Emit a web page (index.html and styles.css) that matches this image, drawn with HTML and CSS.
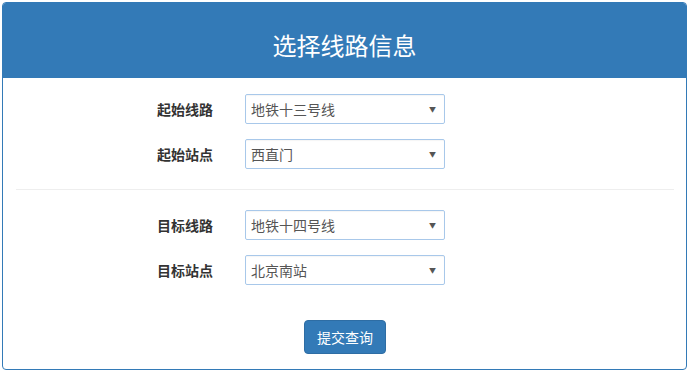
FILE: index.html
```html
<!DOCTYPE html>
<html lang="zh-CN">
<head>
<meta charset="utf-8">
<title>选择线路信息</title>
<link rel="stylesheet" href="styles.css">
</head>
<body>
<div class="panel">
  <div class="panel-heading"><h3 class="panel-title">选择线路信息</h3></div>
  <div class="panel-body">
    <div class="group">
      <div class="row">
        <label class="label">起始线路</label>
        <div class="select"><span>地铁十三号线</span><span class="caret">▼</span></div>
      </div>
      <div class="row">
        <label class="label">起始站点</label>
        <div class="select"><span>西直门</span><span class="caret">▼</span></div>
      </div>
    </div>
    <hr class="divider">
    <div class="group">
      <div class="row">
        <label class="label">目标线路</label>
        <div class="select"><span>地铁十四号线</span><span class="caret">▼</span></div>
      </div>
      <div class="row">
        <label class="label">目标站点</label>
        <div class="select"><span>北京南站</span><span class="caret">▼</span></div>
      </div>
    </div>
    <div class="actions"><button class="btn">提交查询</button></div>
  </div>
</div>
</body>
</html>
```
FILE: styles.css
```css
* { box-sizing: border-box; }
html, body { margin: 0; padding: 0; background: #fff; }
body {
  font-family: "Noto Sans CJK SC", "Noto Sans", sans-serif;
  color: #333;
  padding: 2px 3px 0 2px;
}
.panel {
  border: 1px solid #337ab7;
  border-radius: 4px;
  height: 368px;
  background: #fff;
  overflow: hidden;
}
.panel-heading {
  background: #337ab7;
  height: 75px;
  display: flex;
  align-items: center;
  justify-content: center;
  padding-top: 7px;
}
.panel-title {
  margin: 0;
  color: #fff;
  font-size: 24px;
  font-weight: 400;
  letter-spacing: 0;
}
.panel-body {
  padding: 16px 12px 0 11px;
}
.group {
  display: flex;
  flex-direction: column;
  gap: 15px;
}
.row {
  display: flex;
  align-items: center;
  padding-left: 142px;
}
.label {
  width: 57px;
  text-align: right;
  font-size: 14px;
  font-weight: 700;
  color: #333;
  margin-right: 32px;
}
.select {
  width: 200px;
  height: 30px;
  border: 1px solid #a8c8ea;
  border-radius: 2px;
  box-shadow: inset 0 1px 1px rgba(0,0,0,0.04);
  display: flex;
  align-items: center;
  justify-content: space-between;
  padding: 0 8px 0 5px;
  font-size: 14px;
  color: #555;
}
.caret {
  font-size: 7px;
  color: #555;
}
.divider {
  border: 0;
  border-top: 1px solid #eee;
  margin: 20px 0 20px 2px;
  width: 658px;
}
.actions {
  display: flex;
  justify-content: center;
  margin-top: 35px;
  padding-left: 2px;
}
.btn {
  width: 82px;
  height: 34px;
  background: #337ab7;
  border: 1px solid #2e6da4;
  border-radius: 4px;
  color: #fff;
  font-family: "Noto Sans CJK SC", sans-serif;
  font-size: 14px;
  padding: 0;
}
```
